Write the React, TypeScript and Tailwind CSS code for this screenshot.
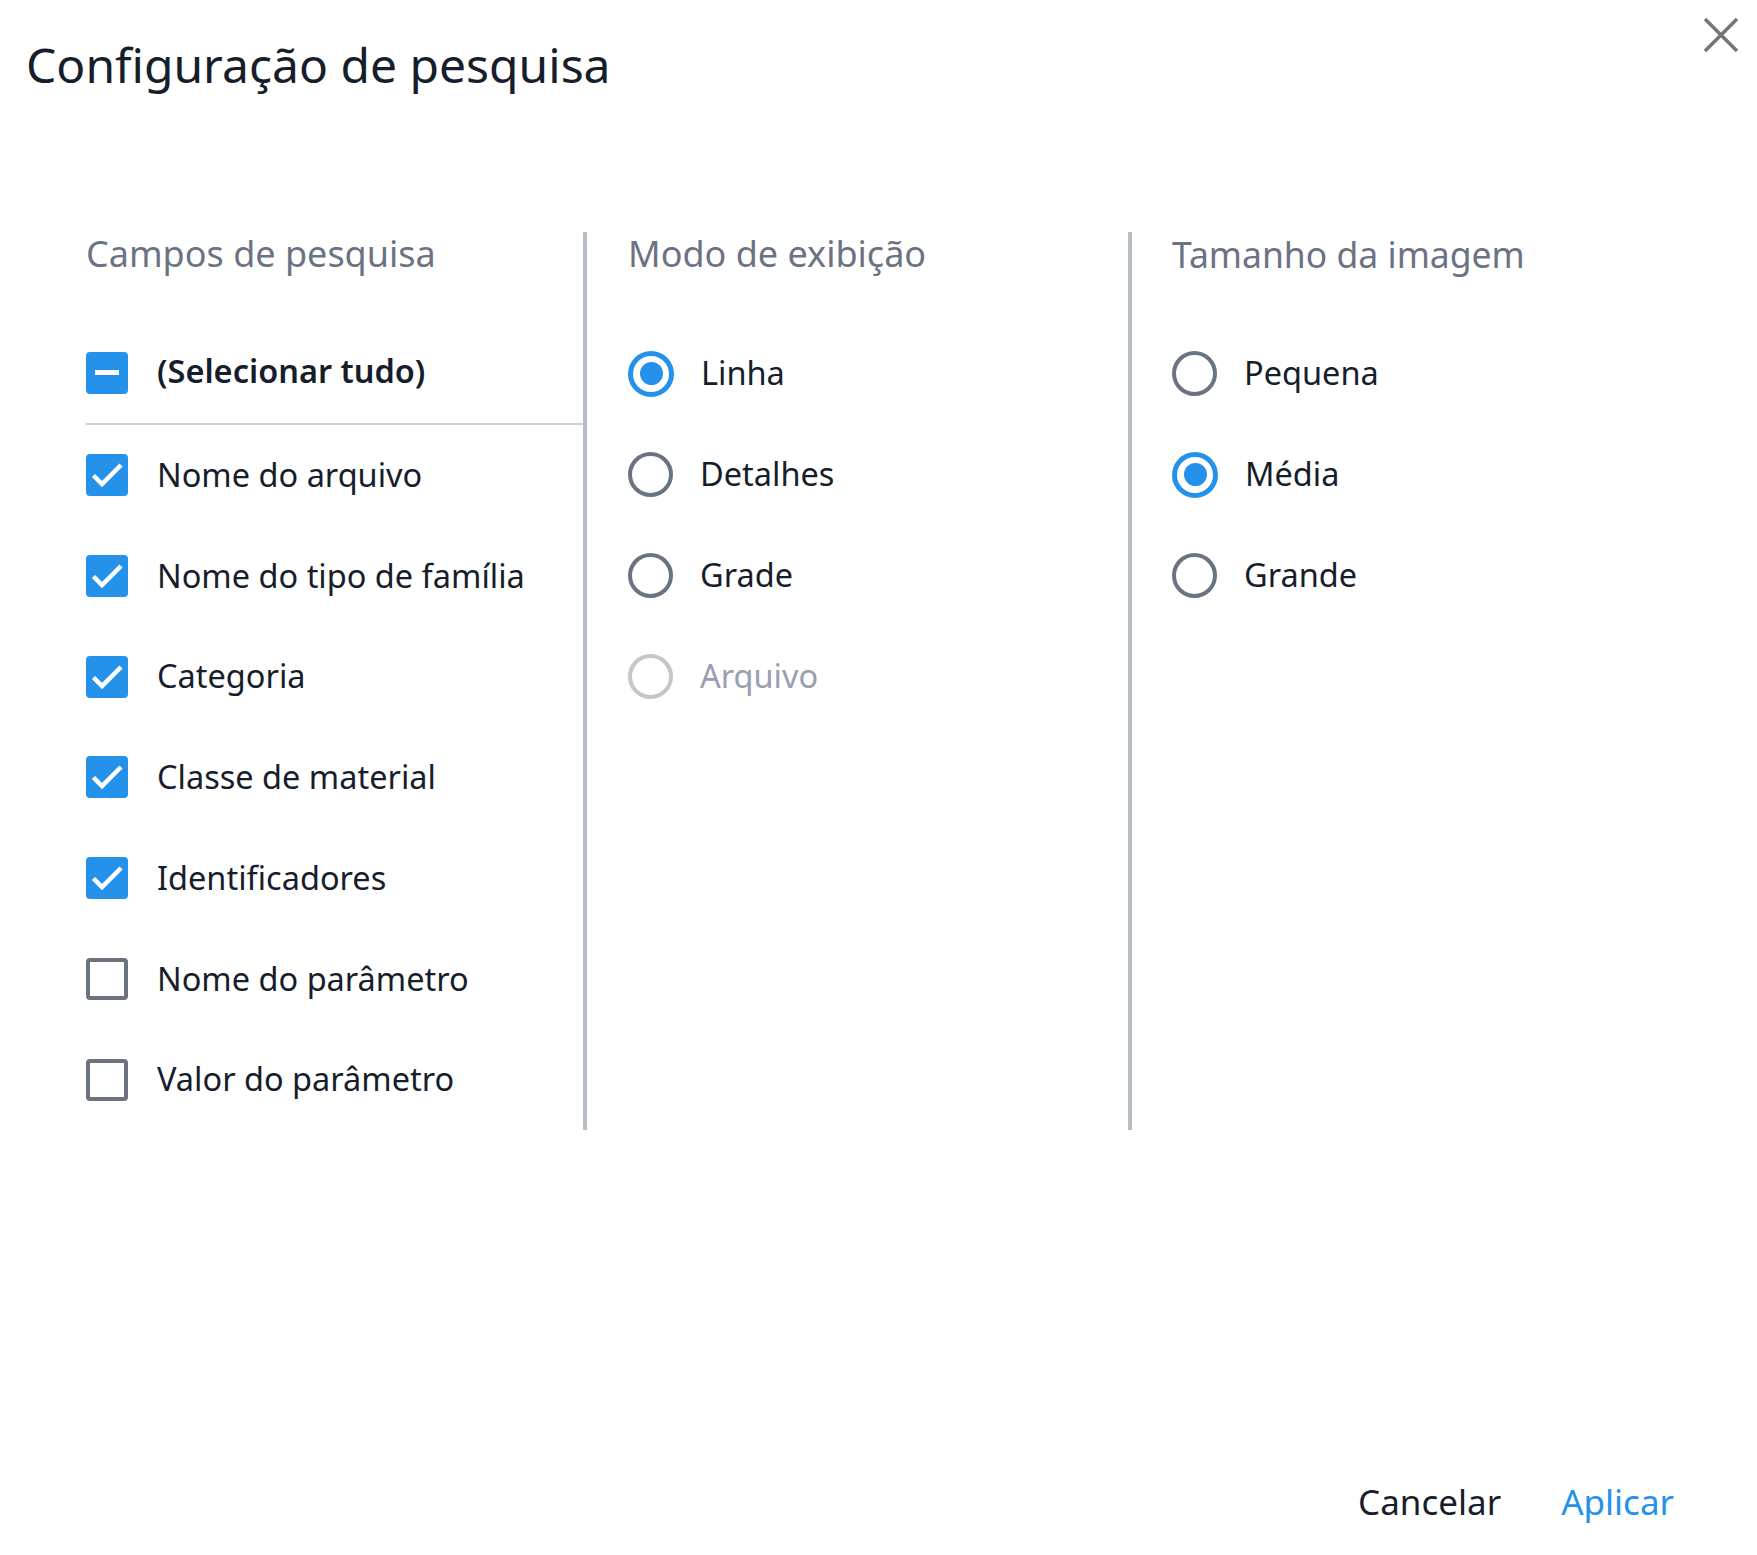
import React from "react";

type CheckState = "checked" | "unchecked" | "mixed";

function Checkbox({ state }: { state: CheckState }) {
  if (state === "unchecked") {
    return (
      <span className="block h-[42px] w-[42px] shrink-0 rounded-[4px] border-[4px] border-[#6b7280] bg-white" />
    );
  }
  return (
    <span className="flex h-[42px] w-[42px] shrink-0 items-center justify-center rounded-[4px] bg-[#2492eb]">
      {state === "checked" ? (
        <svg width="42" height="42" viewBox="0 0 42 42" fill="none">
          <path d="M7.5 21.5l8.5 8.5L35 11" stroke="white" strokeWidth="4.5" />
        </svg>
      ) : (
        <span className="block h-[5px] w-[24px] bg-white" />
      )}
    </span>
  );
}

function Radio({ selected, disabled }: { selected?: boolean; disabled?: boolean }) {
  if (selected) {
    return (
      <span className="flex h-[46px] w-[46px] shrink-0 items-center justify-center rounded-full border-[5px] border-[#2492eb] bg-white">
        <span className="block h-[23px] w-[23px] rounded-full bg-[#2492eb]" />
      </span>
    );
  }
  return (
    <span
      className={
        disabled
          ? "block h-[45px] w-[45px] shrink-0 rounded-full border-[4px] border-[#c6c6c6] bg-white"
          : "block h-[45px] w-[45px] shrink-0 rounded-full border-[4px] border-[#6b7280] bg-white"
      }
    />
  );
}

const fields: { label: string; state: CheckState }[] = [
  { label: "Nome do arquivo", state: "checked" },
  { label: "Nome do tipo de família", state: "checked" },
  { label: "Categoria", state: "checked" },
  { label: "Classe de material", state: "checked" },
  { label: "Identificadores", state: "checked" },
  { label: "Nome do parâmetro", state: "unchecked" },
  { label: "Valor do parâmetro", state: "unchecked" },
];

const modes = [
  { label: "Linha", selected: true },
  { label: "Detalhes" },
  { label: "Grade" },
  { label: "Arquivo", disabled: true },
];

const sizes = [
  { label: "Pequena" },
  { label: "Média", selected: true },
  { label: "Grande" },
];

function RadioRow({
  label,
  selected,
  disabled,
}: {
  label: string;
  selected?: boolean;
  disabled?: boolean;
}) {
  return (
    <div className="flex h-[101px] items-center gap-[27px]">
      <Radio selected={selected} disabled={disabled} />
      <span className={disabled ? "text-[#97a0ae]" : "text-[#161d2b]"}>{label}</span>
    </div>
  );
}

export default function App() {
  return (
    <div className="relative flex h-[1555px] w-[1757px] flex-col bg-white font-['Noto_Sans',sans-serif] text-[#161d2b]">
      <div className="flex items-start justify-between pl-[26px] pr-[15px] pt-[32px]">
        <h1 className="text-[48px] leading-[66px] font-normal">Configuração de pesquisa</h1>
        <button className="mt-[-18px] p-[2px] text-[#757575]">
          <svg width="38" height="38" viewBox="0 0 38 38" fill="none">
            <path d="M3 3l32 32M35 3L3 35" stroke="currentColor" strokeWidth="3.5" />
          </svg>
        </button>
      </div>

      <div className="ml-[86px] mt-[134px] flex text-[32.5px]">
        {/* Campos de pesquisa */}
        <div className="flex h-[898px] w-[497px] flex-col">
          <h2 className="h-[44px] text-[36px] leading-[44px] text-[#6b7383]">Campos de pesquisa</h2>
          <div className="mt-[47px] flex h-[102px] items-center gap-[29px] border-b-2 border-[#cfcfcf] font-semibold">
            <Checkbox state="mixed" />
            <span className="-mt-[4px]">(Selecionar tudo)</span>
          </div>
          {fields.map((f) => (
            <div key={f.label} className="flex h-[101px] items-center gap-[29px]">
              <Checkbox state={f.state} />
              <span>{f.label}</span>
            </div>
          ))}
        </div>

        {/* Modo de exibição */}
        <div className="flex h-[898px] w-[545px] flex-col border-l-4 border-[#b7bdc4] pl-[41px]">
          <h2 className="h-[44px] text-[36px] leading-[44px] text-[#6b7383]">Modo de exibição</h2>
          <div className="mt-[47px]">
            {modes.map((m) => (
              <RadioRow key={m.label} label={m.label} selected={m.selected} disabled={m.disabled} />
            ))}
          </div>
        </div>

        {/* Tamanho da imagem */}
        <div className="flex h-[898px] flex-1 flex-col border-l-4 border-[#b7bdc4] pl-[40px]">
          <h2 className="h-[44px] text-[35.5px] leading-[44px] text-[#6b7383]">Tamanho da imagem</h2>
          <div className="mt-[47px]">
            {sizes.map((s) => (
              <RadioRow key={s.label} label={s.label} selected={s.selected} />
            ))}
          </div>
        </div>
      </div>

      <div className="mt-auto flex items-center justify-end gap-[60px] pb-[27px] pr-[83px] text-[35px]">
        <button className="text-[#161d2b]">Cancelar</button>
        <button className="text-[#2492eb]">Aplicar</button>
      </div>
    </div>
  );
}
